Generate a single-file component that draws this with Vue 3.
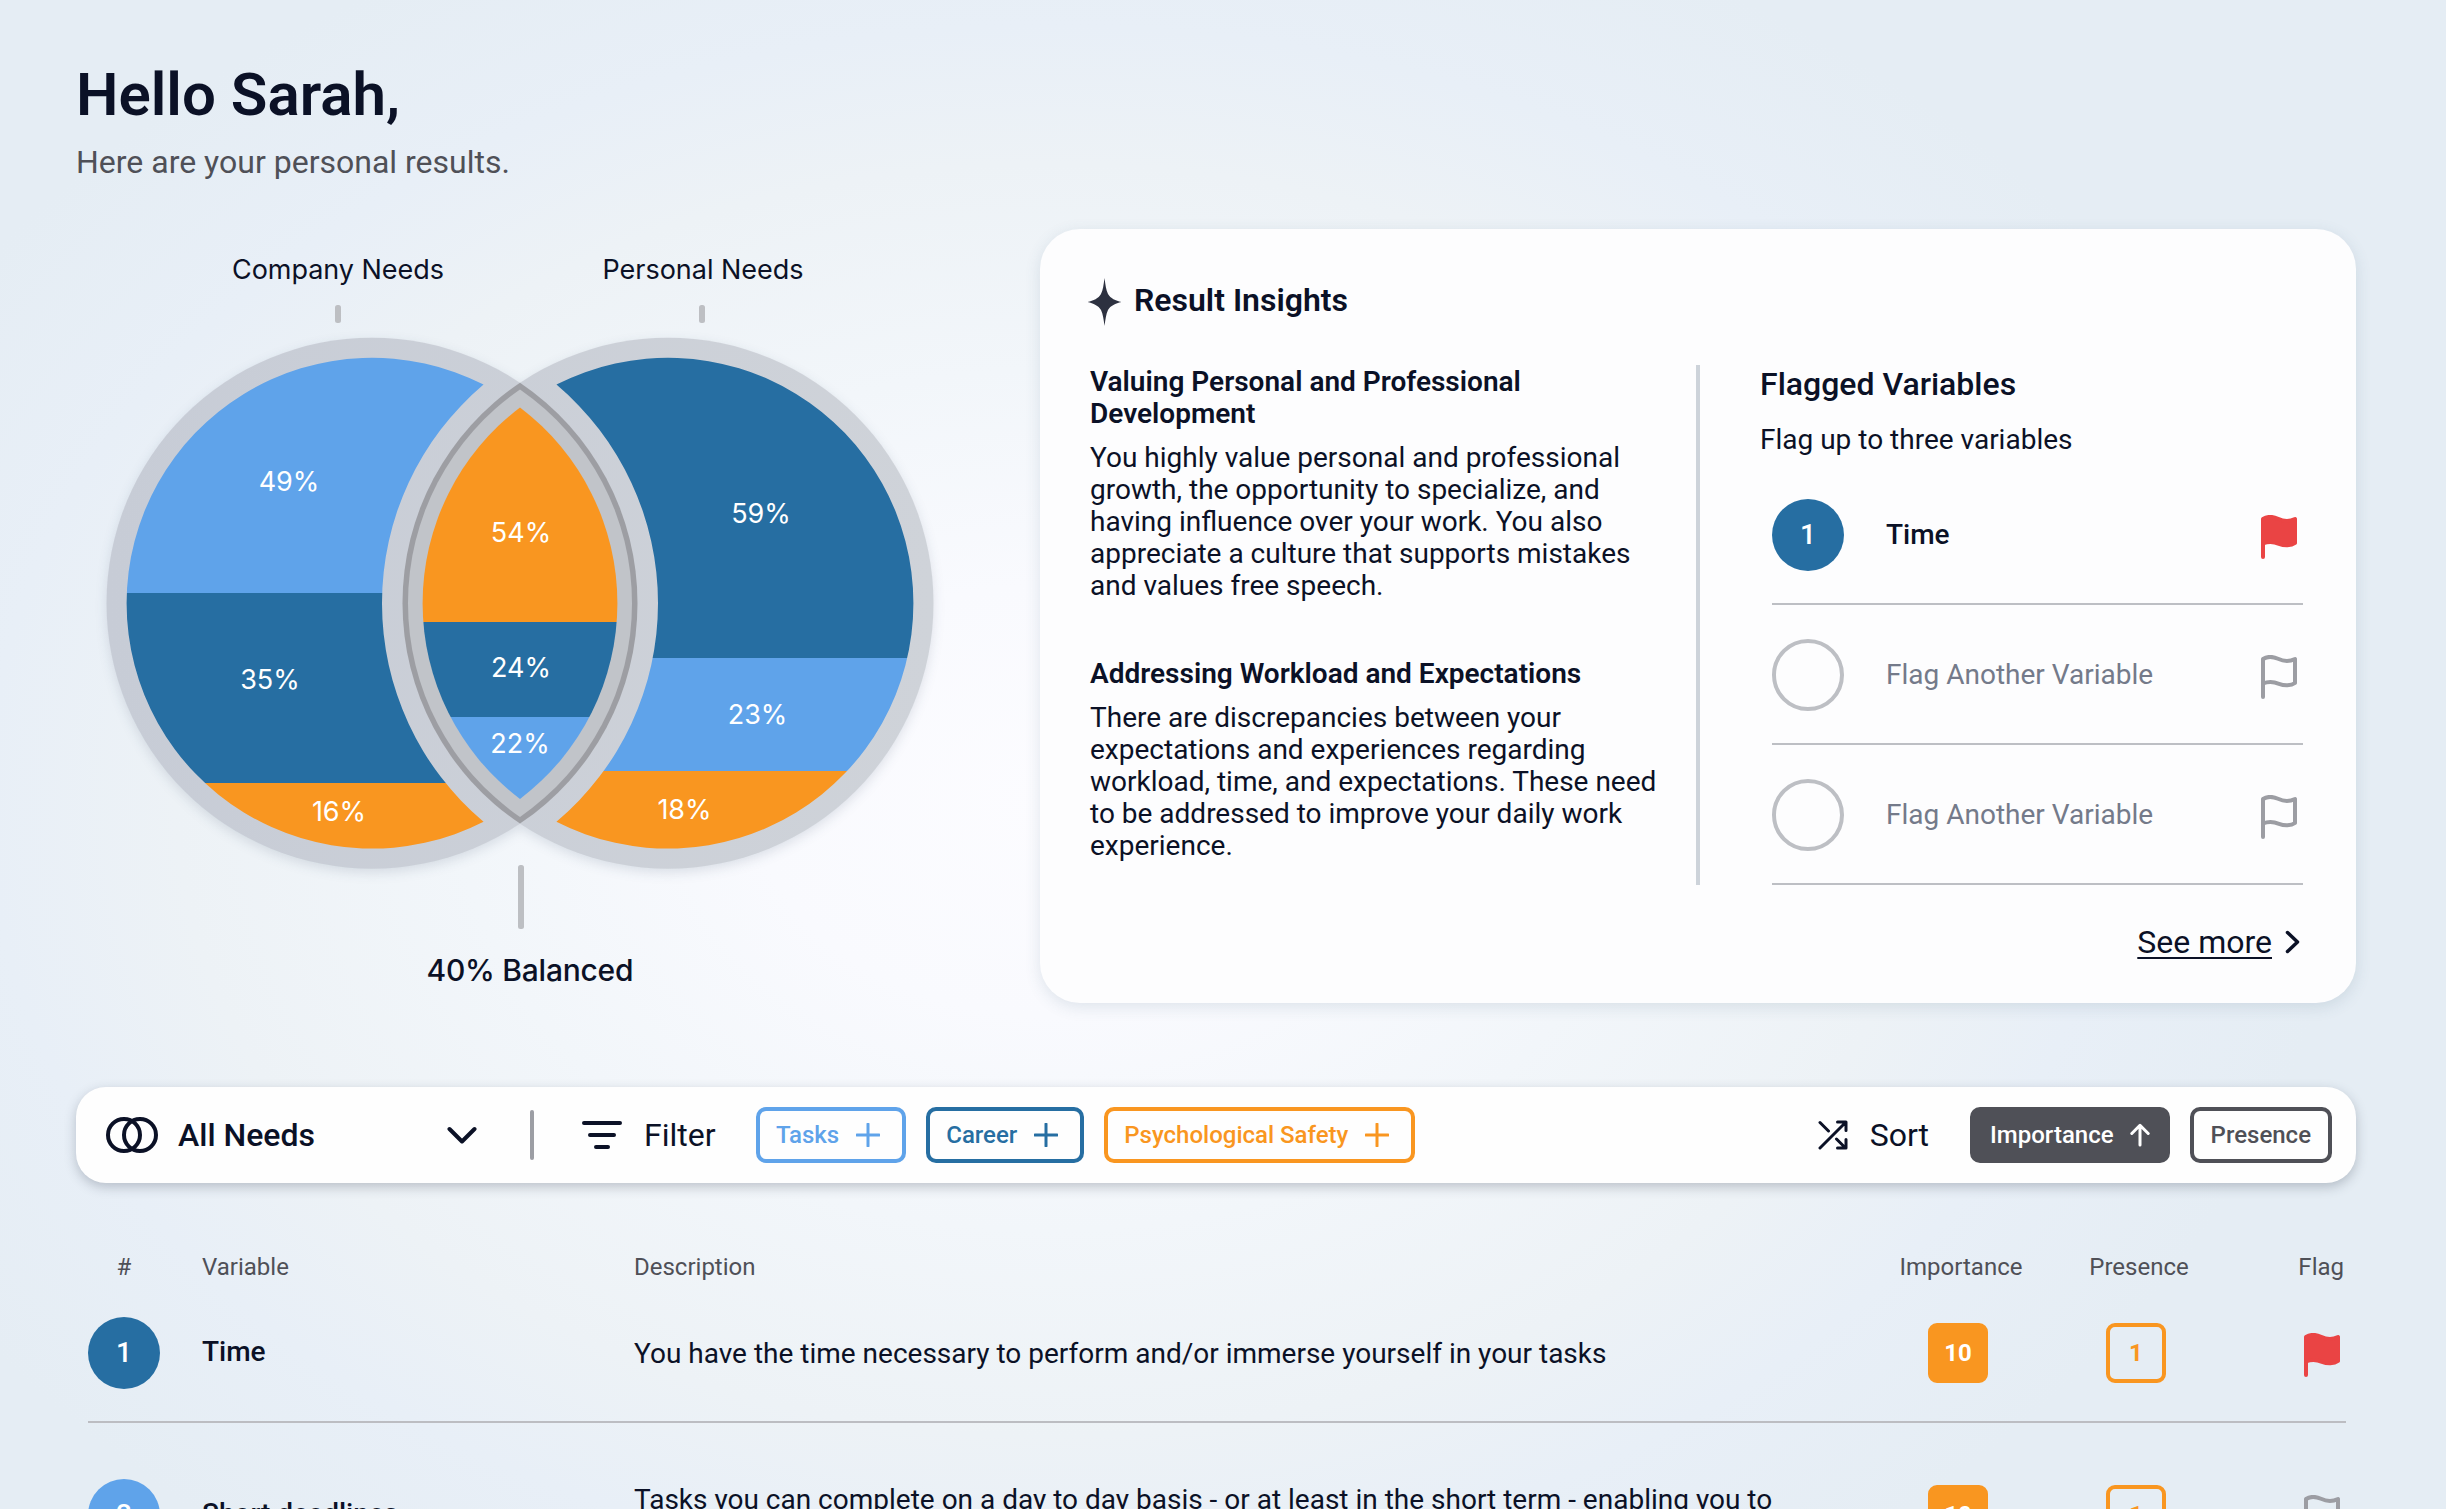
<template>
  <div class="page">
    <header>
      <h1>Hello Sarah,</h1>
      <p class="subtitle">Here are your personal results.</p>
    </header>

    <section class="overview">
      <svg class="venn" viewBox="76 229 964 774" width="964" height="774">
        <defs>
          <linearGradient id="ring" x1="106" x2="934" y1="0" y2="0" gradientUnits="userSpaceOnUse">
            <stop offset="0" stop-color="#c7ccd6" />
            <stop offset="1" stop-color="#cfd3d9" />
          </linearGradient>
          <clipPath id="leftClip"><path :d="crescent(-1)" /></clipPath>
          <clipPath id="rightClip"><path :d="crescent(1)" /></clipPath>
          <clipPath id="midClip"><path :d="lens(245.4)" /></clipPath>
        </defs>

        <g class="rings">
          <circle :cx="LEFT" :cy="CY" r="265.5" fill="url(#ring)" />
          <circle :cx="RIGHT" :cy="CY" r="265.5" fill="url(#ring)" />
        </g>
        <path :d="lens(265.5)" fill="#9d9ea3" />
        <path :d="lens(260)" fill="#c1c4c9" />

        <g v-for="g in groups" :key="g.clip" :clip-path="`url(#${g.clip})`">
          <rect v-for="b in g.bands" :key="b.y" :x="g.x" :y="b.y" width="500" :height="b.h" :fill="b.fill" />
        </g>

        <text v-for="l in labels" :key="l.text" :x="l.x" :y="l.y" class="pct">{{ l.text }}</text>

        <rect x="335" y="305" width="6" height="18" rx="2.5" fill="#bdbfc3" />
        <rect x="699" y="305" width="6" height="18" rx="2.5" fill="#bdbfc3" />
        <rect x="518" y="865" width="6" height="64" rx="2.5" fill="#bdbfc3" />
        <text x="338" y="278.5" class="needs" textLength="212">Company Needs</text>
        <text x="703" y="278.5" class="needs" textLength="201">Personal Needs</text>
        <text x="530" y="980.5" class="balanced" textLength="207">40% Balanced</text>
      </svg>

      <div class="card">
        <div class="card-head">
          <svg width="35" height="48" viewBox="0 0 34 48">
            <path d="M17 0C18 7 18.500 12 20.500 16C23 20.500 28 22.500 34 24C28 25.500 23 27.500 20.500 32C18.500 36 18 41 17 48C16 41 15.500 36 13.500 32C11 27.500 6 25.500 0 24C6 22.500 11 20.500 13.500 16C15.500 12 16 7 17 0Z" />
          </svg>
          <h2>Result Insights</h2>
        </div>
        <div class="card-body">
          <div class="insights">
            <article v-for="i in insights" :key="i.title">
              <h3>{{ i.title }}</h3>
              <p>{{ i.text }}</p>
            </article>
          </div>
          <div class="card-divider"></div>
          <div class="flagged">
            <h2>Flagged Variables</h2>
            <p>Flag up to three variables</p>
            <ul>
              <li v-for="(f, n) in flagged" :key="n">
                <span class="num" :class="f ? 'career' : 'empty'">{{ f ? n + 1 : '' }}</span>
                <span class="flag-name" :class="{ muted: !f }">{{ f || 'Flag Another Variable' }}</span>
                <svg class="flag" :class="{ on: f }" viewBox="0 0 36 44"><path :d="FLAG" /></svg>
              </li>
            </ul>
            <a class="more">
              <span>See more</span>
              <svg width="15" height="24" viewBox="0 0 15 24"><path d="M2.500 2.500L12.500 12L2.500 21.500" /></svg>
            </a>
          </div>
        </div>
      </div>
    </section>

    <section class="toolbar">
      <div class="select">
        <svg width="52" height="36" viewBox="0 0 52 36" stroke-width="4">
          <circle cx="18" cy="18" r="16" />
          <circle cx="34" cy="18" r="16" />
        </svg>
        <span>All Needs</span>
        <svg class="caret" width="30" height="18" viewBox="0 0 30 18" stroke-width="4"><path d="M2.500 3L15 15.500L27.500 3" /></svg>
      </div>
      <div class="separator"></div>
      <div class="filter">
        <svg width="40" height="28" viewBox="0 0 40 28" stroke-width="4"><path d="M2 2H38M8 14H32M14 26H26" /></svg>
        <span>Filter</span>
      </div>
      <div class="chips">
        <button v-for="c in categories" :key="c.name" class="chip" :class="c.cls">
          {{ c.name }}
          <svg width="24" height="24" viewBox="0 0 24 24" stroke-width="3"><path d="M12 1V23M1 12H23" /></svg>
        </button>
      </div>
      <div class="sort">
        <svg width="30" height="30" viewBox="0 0 30 30" stroke-width="3">
          <path d="M2 28L27.500 2.500M19.500 2H28V10.500M2 2.500L10.500 11M18.500 19L27.500 28M28 19.500V28H19.500" />
        </svg>
        <span>Sort</span>
      </div>
      <div class="chips">
        <button class="chip dark">
          Importance
          <svg width="20" height="24" viewBox="0 0 20 24" stroke-width="3"><path d="M10 22V2.500M1.800 10.500L10 2.300L18.200 10.500" /></svg>
        </button>
        <button class="chip gray">Presence</button>
      </div>
    </section>

    <section class="table">
      <div class="grid head">
        <span class="center">#</span>
        <span>Variable</span>
        <span>Description</span>
        <span class="mid">Importance</span>
        <span class="mid">Presence</span>
        <span class="end">Flag</span>
      </div>
      <div v-for="(r, n) in rows" :key="r.name" class="grid row">
        <span class="num" :class="r.cls">{{ n + 1 }}</span>
        <strong>{{ r.name }}</strong>
        <p>{{ r.description }}</p>
        <span class="badge solid">{{ r.importance }}</span>
        <span class="badge">{{ r.presence }}</span>
        <svg class="flag" :class="{ on: r.flagged }" viewBox="0 0 36 44"><path :d="FLAG" /></svg>
      </div>
    </section>
  </div>
</template>

<script setup>
const BLUE = '#5fa3ea'
const NAVY = '#266ea2'
const ORANGE = '#f99620'

const FLAG = 'M2 42V4C6 1.500 12 1.500 17 3.800C22 6.200 28 7 34 4V28C30 31 23 30.800 18 28.800C13 26.800 8 26 2 28.500'

// venn geometry
const LEFT = 372
const RIGHT = 668
const MID = 520
const CY = 603.2

// overlap of both circles at radius r
function lens(r) {
  const h = Math.sqrt(r * r - 148 * 148)
  return `M${MID} ${CY - h}A${r} ${r} 0 0 1 ${MID} ${CY + h}A${r} ${r} 0 0 1 ${MID} ${CY - h}Z`
}

// one circle minus the widened opposite circle
function crescent(side) {
  const r = 245.4
  const cut = 286
  const d = RIGHT - LEFT
  const a = (r * r - cut * cut + d * d) / (2 * d)
  const h = Math.sqrt(r * r - a * a)
  const x = side < 0 ? LEFT + a : RIGHT - a
  const s = side < 0 ? 0 : 1
  return `M${x} ${CY - h}A${r} ${r} 0 1 ${s} ${x} ${CY + h}A${cut} ${cut} 0 0 ${1 - s} ${x} ${CY - h}Z`
}

const groups = [
  { clip: 'leftClip', x: 100, bands: [{ y: 340, h: 253, fill: BLUE }, { y: 593, h: 190, fill: NAVY }, { y: 783, h: 90, fill: ORANGE }] },
  { clip: 'midClip', x: 300, bands: [{ y: 340, h: 282, fill: ORANGE }, { y: 622, h: 95, fill: NAVY }, { y: 717, h: 150, fill: BLUE }] },
  { clip: 'rightClip', x: 500, bands: [{ y: 340, h: 318, fill: NAVY }, { y: 658, h: 113, fill: BLUE }, { y: 771, h: 100, fill: ORANGE }] },
]

const labels = [
  { text: '49%', x: 289, y: 490.5 },
  { text: '35%', x: 270, y: 689 },
  { text: '16%', x: 339, y: 821 },
  { text: '54%', x: 521, y: 541.5 },
  { text: '24%', x: 521, y: 677 },
  { text: '22%', x: 520, y: 753 },
  { text: '59%', x: 761, y: 522.5 },
  { text: '23%', x: 757.5, y: 724 },
  { text: '18%', x: 684.5, y: 819 },
]

const insights = [
  {
    title: 'Valuing Personal and Professional Development',
    text: 'You highly value personal and professional growth, the opportunity to specialize, and having influence over your work. You also appreciate a culture that supports mistakes and values free speech.',
  },
  {
    title: 'Addressing Workload and Expectations',
    text: 'There are discrepancies between your expectations and experiences regarding workload, time, and expectations. These need to be addressed to improve your daily work experience.',
  },
]

const flagged = ['Time', null, null]

const categories = [
  { name: 'Tasks', cls: 'tasks' },
  { name: 'Career', cls: 'career-line' },
  { name: 'Psychological Safety', cls: 'safety' },
]

const rows = [
  { name: 'Time', cls: 'career', description: 'You have the time necessary to perform and/or immerse yourself in your tasks', importance: 10, presence: 1, flagged: true },
  { name: 'Short deadlines', cls: 'task', description: 'Tasks you can complete on a day to day basis - or at least in the short term - enabling you to see results quickly', importance: 10, presence: 1, flagged: false },
]
</script>

<style>
body { margin: 0; overflow: hidden; }
</style>

<style scoped>
.page {
  box-sizing: border-box;
  height: 1509px;
  padding: 60px 90px 0 76px;
  overflow: hidden;
  font-family: Roboto, sans-serif;
  font-size: 28px;
  line-height: 32px;
  color: #0b1126;
  background: radial-gradient(ellipse 1180px 860px at 1050px 800px, #fcfcff 0%, #f9fafe 25%, #f2f6fa 50%, #edf2f6 74%, #e8eff7 90%, #e5edf4 110%);
}
h1, h2, h3, p, ul { margin: 0; padding: 0; }
svg { flex: none; fill: none; stroke-linecap: round; stroke-linejoin: round; }

h1 { font-size: 60px; line-height: 70px; font-weight: 600; }
.subtitle { margin-top: 12px; font-size: 32px; line-height: 40px; color: #4f5057; }

.overview { display: flex; margin-top: 47px; }
.venn text { font-family: Inter, sans-serif; text-anchor: middle; fill: #0b1126; }
.venn .pct { font-size: 27px; fill: #fff; }
.venn .needs { font-size: 27px; }
.venn .balanced { font-size: 30px; font-weight: 500; }
.rings { filter: drop-shadow(0 4px 6px rgba(20, 40, 70, 0.12)); }

.card { box-sizing: border-box; width: 1316px; height: 774px; padding: 49px 53px 0 47px; border-radius: 40px; background: #fdfdfe; box-shadow: 0 4px 16px rgba(60, 90, 120, 0.14); }
.card-head { display: flex; align-items: center; gap: 12px; }
.card-head svg { fill: #2d3140; }
.card-head h2 { padding-bottom: 5px; font-weight: 600; }
h2 { font-size: 32px; line-height: 38px; font-weight: 500; }
h3 { font-size: 28px; font-weight: 600; }
.card-body { display: flex; margin: 39px 0 0 3px; }
.insights { width: 580px; padding-top: 1px; }
.insights p { margin-top: 12px; }
article + article { margin-top: 56px; }
.card-divider { width: 4px; height: 520px; margin: 0 60px 0 26px; background: #cdd3da; }
.flagged { flex: 1; }
.flagged > p { margin-top: 21px; }
ul { margin: 9px 0 0 12px; list-style: none; }
li { box-sizing: border-box; display: flex; align-items: center; height: 140px; padding: 2px 6px 0 0; border-bottom: 2px solid #bdbfc4; }
.flag-name { margin-left: 42px; font-weight: 500; }
.flag-name.muted { color: #747a8a; font-weight: 400; }
.flag { width: 36px; height: 44px; padding-top: 4px; stroke: #9c9da3; stroke-width: 4; }
.flag.on { stroke: #ea4444; fill: #ea4444; }
li .flag { margin-left: auto; }
.num { box-sizing: border-box; width: 72px; height: 72px; border-radius: 50%; color: #fff; font-weight: 500; line-height: 72px; text-align: center; }
.num.career { background: #266ea2; }
.num.task { background: #5fa3ea; }
.num.empty { border: 4px solid #bdbfc4; }
.more { display: flex; align-items: center; justify-content: flex-end; gap: 13px; margin: 38px 3px 0 0; font-size: 32px; line-height: 38px; }
.more span { text-decoration: underline; text-decoration-thickness: 2px; text-underline-offset: 4px; }
.more svg { stroke: #0b1126; stroke-width: 3.5; }

.toolbar { box-sizing: border-box; display: flex; align-items: center; width: 2280px; height: 96px; margin-top: 84px; padding: 0 24px 0 30px; border-radius: 30px; background: #fefefe; box-shadow: 0 4px 12px rgba(40, 50, 70, 0.26); font-size: 32px; }
.toolbar svg { stroke: currentColor; }
.select { display: flex; align-items: center; width: 371px; font-weight: 500; }
.select span { margin-left: 20px; }
.caret { margin-left: auto; }
.separator { width: 4px; height: 50px; margin: 0 48px 0 53px; border-radius: 2px; background: #9c9ea4; }
.filter { display: flex; align-items: center; gap: 22px; width: 174px; }
.sort { display: flex; align-items: center; gap: 22px; margin: 0 41px 0 auto; }
.chips { display: flex; gap: 20px; }
.chip { box-sizing: border-box; display: flex; align-items: center; gap: 17px; height: 56px; padding: 0 22px 0 16px; border: 4px solid; border-radius: 10px; background: none; font: 500 24px/28px Roboto, sans-serif; }
.tasks { color: #5fa3ea; }
.career-line { color: #266ea2; }
.safety { color: #f99620; }
.gray { color: #4f5057; padding: 0 17px; }
.dark { gap: 16px; border-color: #4f5057; background: #4f5057; color: #fff; padding: 0 16px; }

.table { width: 2258px; margin: 70px 0 0 12px; }
.grid { display: grid; grid-template-columns: 114px 432px 1235px 178px 178px 1fr; align-items: center; }
.head { font-size: 24px; line-height: 28px; color: #4f5057; }
.center { width: 72px; text-align: center; }
.mid { padding-left: 6px; text-align: center; }
.end { padding-right: 2px; text-align: right; }
.row { padding: 36px 0 32px; border-bottom: 2px solid #bcbdc2; }
.row + .row { padding-top: 56px; }
.row strong { padding-bottom: 3px; font-weight: 500; }
.row p { width: 1150px; padding-top: 1px; }
.badge { box-sizing: border-box; justify-self: center; width: 60px; height: 60px; border: 4px solid #f99620; border-radius: 9px; color: #f99620; font-size: 24px; font-weight: 700; line-height: 52px; text-align: center; }
.badge.solid { background: #f99620; color: #fff; }
.row .flag { justify-self: end; margin-right: 6px; }
</style>
